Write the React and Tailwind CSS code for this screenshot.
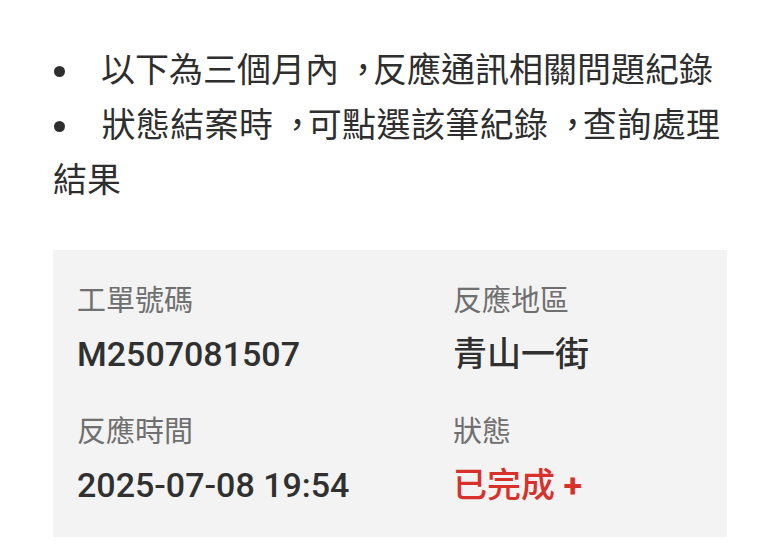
const FONT = { fontFamily: 'Roboto, "Noto Sans CJK TC", sans-serif' }

// full-width comma, glyph set towards the middle of its cell as in the TC layout
const C = () => <span className="inline-block w-[1em] pl-[7px]">，</span>

function Bullet({ children }) {
  return (
    <p className="text-justify leading-[55px]">
      <span className="inline-block w-[48px] align-middle">
        <span className="block w-[11px] h-[11px] rounded-full bg-[#2e2e2e] ml-[1px] mb-[4px]" />
      </span>
      {children}
    </p>
  )
}

function Field({ label, value, valueClass = 'text-[#303030]' }) {
  return (
    <div>
      <div className="text-[29px] leading-[40px] text-[#6f6f6f]">{label}</div>
      <div className={`mt-2 text-[34px] leading-[50px] font-medium ${valueClass}`}>{value}</div>
    </div>
  )
}

export default function App() {
  return (
    <div lang="zh-TW" style={FONT} className="w-[780px] h-[551px] overflow-hidden bg-white px-[53px] pt-[43px]">
      <div className="text-[34px] text-[#2e2e2e] pr-[7px]">
        <Bullet>以下為三個月內<C />反應通訊相關問題紀錄</Bullet>
        <Bullet>狀態結案時<C />可點選該筆紀錄<C />查詢處理結果</Bullet>
      </div>

      <div className="mt-[42px] bg-[#f3f3f3] pl-[24px] pr-6 pt-[31px] pb-[27px]">
        <div className="grid grid-cols-[376px_1fr] gap-y-[33px]">
          <Field label="工單號碼" value="M2507081507" />
          <Field label="反應地區" value="青山一街" />
          <Field label="反應時間" value="2025-07-08 19:54" />
          <Field
            label="狀態"
            value={<>已完成 <span className="font-bold">+</span></>}
            valueClass="text-[#d8312b]"
          />
        </div>
      </div>
    </div>
  )
}
